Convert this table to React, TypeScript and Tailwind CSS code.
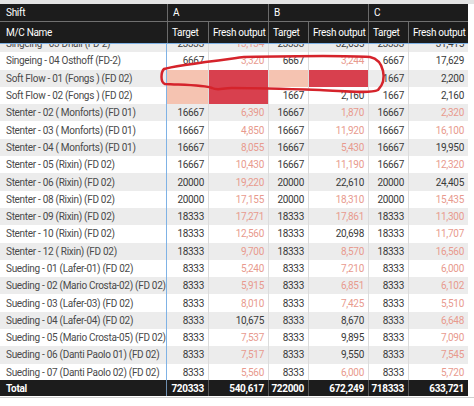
import React from "react";

type Cell = { v: string; dark?: boolean; bg?: "peach" | "red" };
type Row = { name: string; cells: Cell[] };

const r = (v: string): Cell => ({ v });
const d = (v: string): Cell => ({ v, dark: true });

const rows: Row[] = [
  { name: "Singeing - 03 Dhall (FD-2)", cells: [d("23333"), r("13,134"), d("23333"), d("32,655"), d("23333"), d("31,415")] },
  { name: "Singeing - 04 Osthoff (FD-2)", cells: [d("6667"), r("3,320"), d("6667"), r("3,244"), d("6667"), d("17,629")] },
  { name: "Soft Flow - 01 (Fongs ) (FD 02)", cells: [{ v: "", bg: "peach" }, { v: "", bg: "red" }, { v: "", bg: "peach" }, { v: "", bg: "red" }, d("1667"), d("2,200")] },
  { name: "Soft Flow - 02 (Fongs ) (FD 02)", cells: [{ v: "", bg: "peach" }, { v: "", bg: "red" }, d("1667"), d("2,160"), d("1667"), d("2,160")] },
  { name: "Stenter - 02 ( Monforts) (FD 01)", cells: [d("16667"), r("6,390"), d("16667"), r("1,870"), d("16667"), r("2,320")] },
  { name: "Stenter - 03 ( Monforts) (FD 01)", cells: [d("16667"), r("4,850"), d("16667"), r("11,920"), d("16667"), r("16,100")] },
  { name: "Stenter - 04 ( Monforts) (FD 01)", cells: [d("16667"), r("8,055"), d("16667"), r("5,430"), d("16667"), d("19,950")] },
  { name: "Stenter - 05 (Rixin) (FD 02)", cells: [d("16667"), r("10,430"), d("16667"), r("11,190"), d("16667"), r("12,320")] },
  { name: "Stenter - 06 (Rixin) (FD 02)", cells: [d("20000"), r("19,220"), d("20000"), d("22,610"), d("20000"), d("24,405")] },
  { name: "Stenter - 08 (Rixin) (FD 02)", cells: [d("20000"), r("17,155"), d("20000"), r("18,310"), d("20000"), r("15,435")] },
  { name: "Stenter - 09 (Rixin) (FD 02)", cells: [d("18333"), r("17,271"), d("18333"), r("17,861"), d("18333"), r("11,300")] },
  { name: "Stenter - 10 (Rixin) (FD 02)", cells: [d("18333"), r("12,560"), d("18333"), d("20,698"), d("18333"), r("11,707")] },
  { name: "Stenter - 12 ( Rixin) (FD 02)", cells: [d("18333"), r("9,700"), d("18333"), r("8,570"), d("18333"), r("16,560")] },
  { name: "Sueding - 01 (Lafer-01) (FD 02)", cells: [d("8333"), r("5,240"), d("8333"), r("7,210"), d("8333"), r("6,000")] },
  { name: "Sueding - 02 (Mario Crosta-02) (FD 02)", cells: [d("8333"), r("5,915"), d("8333"), r("6,851"), d("8333"), r("6,102")] },
  { name: "Sueding - 03 (Lafer-03) (FD 02)", cells: [d("8333"), r("8,010"), d("8333"), r("7,425"), d("8333"), r("5,510")] },
  { name: "Sueding - 04 (Lafer-04) (FD 02)", cells: [d("8333"), d("10,675"), d("8333"), d("8,670"), d("8333"), r("6,648")] },
  { name: "Sueding - 05 (Mario Crosta-05) (FD 02)", cells: [d("8333"), r("7,537"), d("8333"), d("9,895"), d("8333"), r("7,090")] },
  { name: "Sueding - 06 (Danti Paolo 01) (FD 02)", cells: [d("8333"), r("7,517"), d("8333"), d("9,550"), d("8333"), r("7,545")] },
  { name: "Sueding - 07 (Danti Paolo 02) (FD 02)", cells: [d("8333"), r("5,560"), d("8333"), r("6,000"), d("8333"), r("5,720")] },
];

const cols = "grid grid-cols-[167px_41px_60px_40px_60px_40px_60px]";

export default function App() {
  return (
    <div className="relative w-[474px] h-[406px] overflow-hidden bg-white font-['Roboto',sans-serif] text-[10px] tracking-[-0.3px]">
      <div className="h-[4px] bg-[#e3e3e3]" />
      <div className="w-[468px]">
        {/* header row 1 */}
        <div className="grid grid-cols-[167px_101px_100px_100px] h-[18px] bg-[#1c1c1c] text-white border-b border-[#707070]">
          <div className="pl-[6px] flex items-center">Shift</div>
          <div className="pl-[5px] flex items-center border-l border-[#6a6a6a]">A</div>
          <div className="pl-[5px] flex items-center border-l border-[#6a6a6a]">B</div>
          <div className="pl-[5px] flex items-center border-l border-[#6a6a6a]">C</div>
        </div>
        {/* header row 2 */}
        <div className={`${cols} h-[22px] bg-[#1c1c1c] text-white border-b border-[#7fb2e5]`}>
          <div className="pl-[6px] flex items-center">M/C Name</div>
          {["Target", "Fresh output", "Target", "Fresh output", "Target", "Fresh output"].map((t, i) => (
            <div key={i} className="pl-[4px] flex items-center border-l border-[#6a6a6a] whitespace-nowrap">
              {t}
            </div>
          ))}
        </div>
        {/* body */}
        <div className="h-[336px] overflow-hidden">
          <div className="mt-[-9px]">
            {rows.map((row, ri) => (
              <div key={ri} className={`${cols} h-[17.3px] ${ri % 2 === 0 ? "bg-[#ececec]" : "bg-white"}`}>
                <div className="pl-[6px] flex items-center text-[#4a4a4a] whitespace-nowrap border-r border-[#7fb2e5]">
                  {row.name}
                </div>
                {row.cells.map((c, ci) => (
                  <div
                    key={ci}
                    className={`flex items-center justify-end pr-[4px] whitespace-nowrap ${ci > 0 ? "border-l border-[#dcdcdc]" : ""} ${
                      c.bg === "peach" ? "bg-[#f5c3b1]" : c.bg === "red" ? "bg-[#d8404e]" : ""
                    } ${c.dark ? "text-[#3a3a3a]" : "text-[#e89a8e]"}`}
                  >
                    {c.v}
                  </div>
                ))}
              </div>
            ))}
          </div>
        </div>
        {/* total */}
        <div className={`${cols} h-[16px] bg-[#1c1c1c] text-white font-bold`}>
          <div className="pl-[6px] flex items-center border-r border-[#6f8fb0]">Total</div>
          {["720333", "540,617", "722000", "672,249", "718333", "633,721"].map((t, i) => (
            <div key={i} className={`flex items-center justify-end pr-[4px] ${i > 0 ? "border-l border-[#555]" : ""}`}>
              {t}
            </div>
          ))}
        </div>
      </div>
      <div className="h-[1px] mt-[1px] bg-[#cfcfcf]" />
      <svg className="absolute left-0 top-0 pointer-events-none" width="474" height="406" viewBox="0 0 474 406">
        <path
          d="M 244 57 C 290 56 340 55 370 57 C 384 60 388 80 378 90 C 370 94 345 91 320 90 C 290 89 260 88 232 88 C 222 88 218 91 212 88 C 205 85 185 85 165 84 C 160 82 161 72 164 69 C 172 66 205 62 244 57"
          fill="none"
          stroke="#d5232b"
          strokeWidth="2.5"
          strokeLinecap="round"
          strokeLinejoin="round"
        />
      </svg>
    </div>
  );
}
